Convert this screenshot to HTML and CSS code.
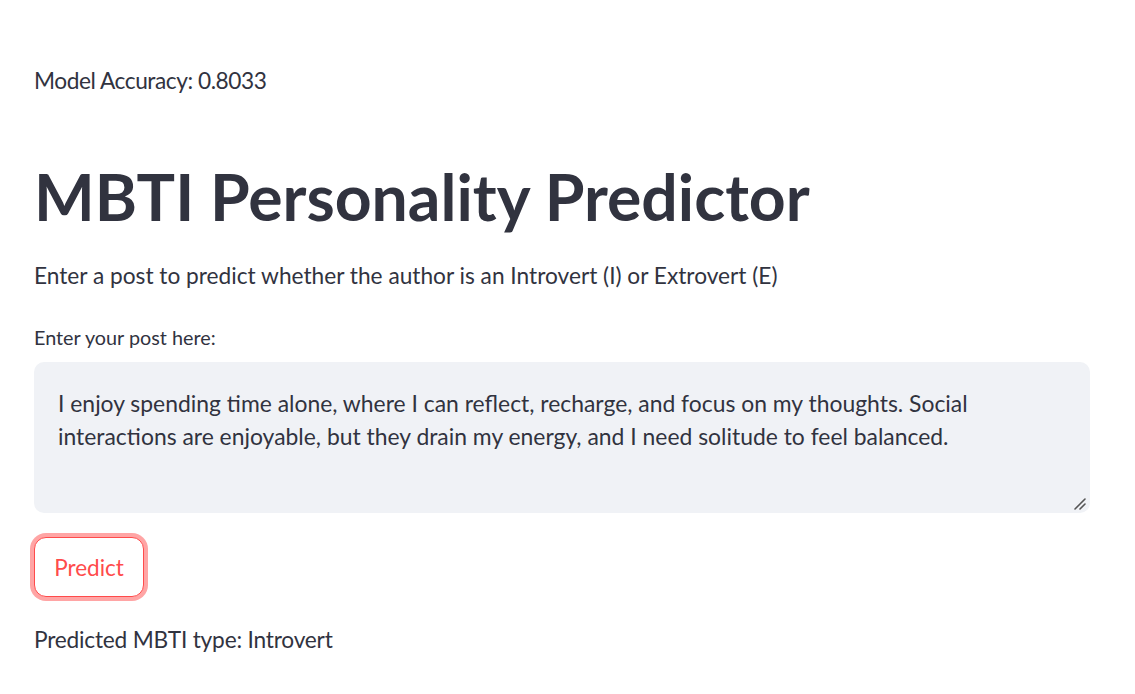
FILE: index.html
```html
<!DOCTYPE html>
<html lang="en">
<head>
<meta charset="utf-8">
<title>MBTI Personality Predictor</title>
<link rel="stylesheet" href="styles.css">
</head>
<body>
<main class="main">
  <p class="text acc">Model Accuracy: 0.8033</p>
  <h1 class="title">MBTI Personality Predictor</h1>
  <p class="text sub">Enter a post to predict whether the author is an Introvert (I) or Extrovert (E)</p>
  <label class="label">Enter your post here:</label>
  <div class="area">
    <div class="area-text">I enjoy spending time alone, where I can reflect, recharge, and focus on my thoughts. Social<br>interactions are enjoyable, but they drain my energy, and I need solitude to feel balanced.</div>
    <svg class="grip" width="12" height="12" viewBox="0 0 12 12"><path d="M1 11 L11 1 M6 11 L11 6" stroke="#555" stroke-width="1.6" stroke-linecap="round"/></svg>
  </div>
  <div class="btn-row"><button class="btn">Predict</button></div>
  <p class="text result">Predicted MBTI type: Introvert</p>
</main>
</body>
</html>
```
FILE: styles.css
```css
* { box-sizing: border-box; }
html, body { margin: 0; padding: 0; background: #fff; }
body { font-family: "Lato", "Noto Sans", sans-serif; color: #31333f; }
.main { display: flex; flex-direction: column; align-items: stretch; padding: 62px 45px 0 34px; }
.text { margin: 0; font-size: 22.7px; line-height: 38px; }
.acc { letter-spacing: -0.45px; }
.title { margin: 57px 0 0; font-size: 64.3px; line-height: 79px; font-weight: 700; letter-spacing: 0; }
.sub { margin-top: 21px; }
.label { margin-top: 27px; font-size: 19.8px; line-height: 30px; }
.area { position: relative; margin-top: 10px; height: 151px; background: #f0f2f6; border-radius: 10px; padding: 25px 24px; }
.area-text { font-size: 22.9px; line-height: 33px; }
.grip { position: absolute; right: 4px; bottom: 3px; }
.btn-row { display: flex; margin-top: 24px; }
.btn { font-family: inherit; font-size: 22.5px; color: #ff4b4b; background: #fff; border: 1.5px solid #ff4b4b; border-radius: 12px; height: 60px; width: 110px; padding: 0; box-shadow: 0 0 0 4px rgba(255, 75, 75, 0.5); }
.result { margin-top: 24px; letter-spacing: -0.2px; }
```
